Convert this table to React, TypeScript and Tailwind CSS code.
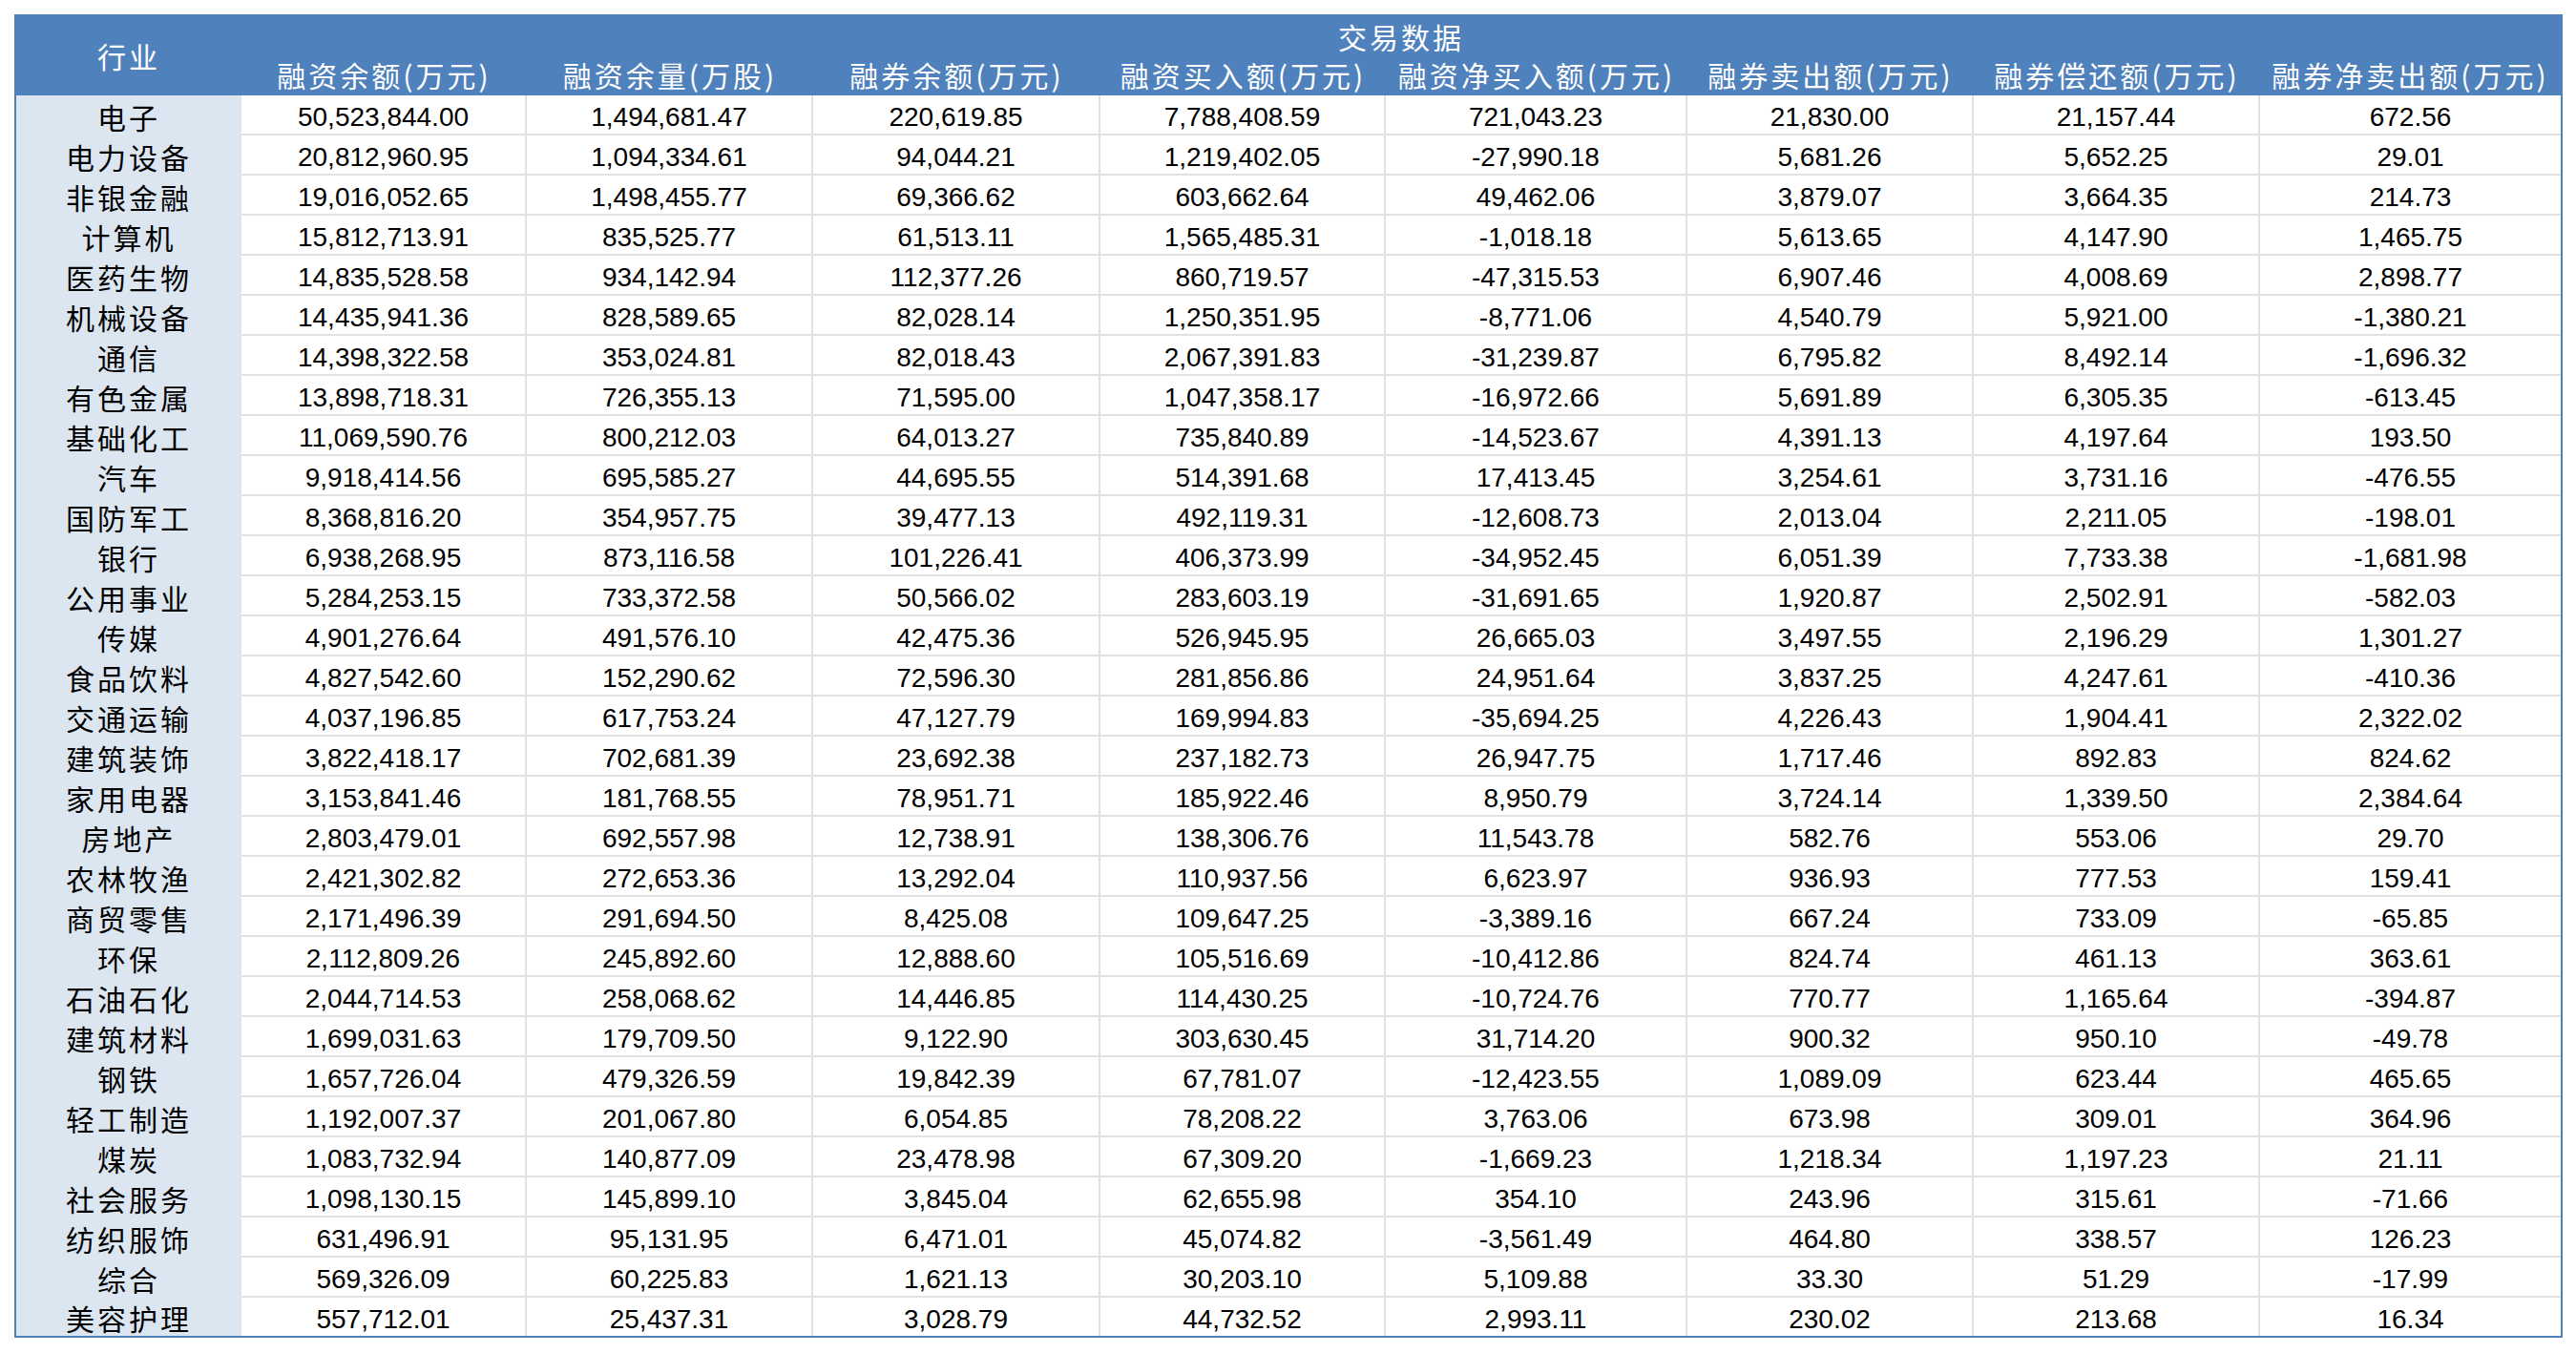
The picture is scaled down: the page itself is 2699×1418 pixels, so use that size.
import React from 'react';

const columns = [
  '融资余额(万元)',
  '融资余量(万股)',
  '融券余额(万元)',
  '融资买入额(万元)',
  '融资净买入额(万元)',
  '融券卖出额(万元)',
  '融券偿还额(万元)',
  '融券净卖出额(万元)',
];

const rows: [string, string[]][] = [
  ['电子', ['50,523,844.00', '1,494,681.47', '220,619.85', '7,788,408.59', '721,043.23', '21,830.00', '21,157.44', '672.56']],
  ['电力设备', ['20,812,960.95', '1,094,334.61', '94,044.21', '1,219,402.05', '-27,990.18', '5,681.26', '5,652.25', '29.01']],
  ['非银金融', ['19,016,052.65', '1,498,455.77', '69,366.62', '603,662.64', '49,462.06', '3,879.07', '3,664.35', '214.73']],
  ['计算机', ['15,812,713.91', '835,525.77', '61,513.11', '1,565,485.31', '-1,018.18', '5,613.65', '4,147.90', '1,465.75']],
  ['医药生物', ['14,835,528.58', '934,142.94', '112,377.26', '860,719.57', '-47,315.53', '6,907.46', '4,008.69', '2,898.77']],
  ['机械设备', ['14,435,941.36', '828,589.65', '82,028.14', '1,250,351.95', '-8,771.06', '4,540.79', '5,921.00', '-1,380.21']],
  ['通信', ['14,398,322.58', '353,024.81', '82,018.43', '2,067,391.83', '-31,239.87', '6,795.82', '8,492.14', '-1,696.32']],
  ['有色金属', ['13,898,718.31', '726,355.13', '71,595.00', '1,047,358.17', '-16,972.66', '5,691.89', '6,305.35', '-613.45']],
  ['基础化工', ['11,069,590.76', '800,212.03', '64,013.27', '735,840.89', '-14,523.67', '4,391.13', '4,197.64', '193.50']],
  ['汽车', ['9,918,414.56', '695,585.27', '44,695.55', '514,391.68', '17,413.45', '3,254.61', '3,731.16', '-476.55']],
  ['国防军工', ['8,368,816.20', '354,957.75', '39,477.13', '492,119.31', '-12,608.73', '2,013.04', '2,211.05', '-198.01']],
  ['银行', ['6,938,268.95', '873,116.58', '101,226.41', '406,373.99', '-34,952.45', '6,051.39', '7,733.38', '-1,681.98']],
  ['公用事业', ['5,284,253.15', '733,372.58', '50,566.02', '283,603.19', '-31,691.65', '1,920.87', '2,502.91', '-582.03']],
  ['传媒', ['4,901,276.64', '491,576.10', '42,475.36', '526,945.95', '26,665.03', '3,497.55', '2,196.29', '1,301.27']],
  ['食品饮料', ['4,827,542.60', '152,290.62', '72,596.30', '281,856.86', '24,951.64', '3,837.25', '4,247.61', '-410.36']],
  ['交通运输', ['4,037,196.85', '617,753.24', '47,127.79', '169,994.83', '-35,694.25', '4,226.43', '1,904.41', '2,322.02']],
  ['建筑装饰', ['3,822,418.17', '702,681.39', '23,692.38', '237,182.73', '26,947.75', '1,717.46', '892.83', '824.62']],
  ['家用电器', ['3,153,841.46', '181,768.55', '78,951.71', '185,922.46', '8,950.79', '3,724.14', '1,339.50', '2,384.64']],
  ['房地产', ['2,803,479.01', '692,557.98', '12,738.91', '138,306.76', '11,543.78', '582.76', '553.06', '29.70']],
  ['农林牧渔', ['2,421,302.82', '272,653.36', '13,292.04', '110,937.56', '6,623.97', '936.93', '777.53', '159.41']],
  ['商贸零售', ['2,171,496.39', '291,694.50', '8,425.08', '109,647.25', '-3,389.16', '667.24', '733.09', '-65.85']],
  ['环保', ['2,112,809.26', '245,892.60', '12,888.60', '105,516.69', '-10,412.86', '824.74', '461.13', '363.61']],
  ['石油石化', ['2,044,714.53', '258,068.62', '14,446.85', '114,430.25', '-10,724.76', '770.77', '1,165.64', '-394.87']],
  ['建筑材料', ['1,699,031.63', '179,709.50', '9,122.90', '303,630.45', '31,714.20', '900.32', '950.10', '-49.78']],
  ['钢铁', ['1,657,726.04', '479,326.59', '19,842.39', '67,781.07', '-12,423.55', '1,089.09', '623.44', '465.65']],
  ['轻工制造', ['1,192,007.37', '201,067.80', '6,054.85', '78,208.22', '3,763.06', '673.98', '309.01', '364.96']],
  ['煤炭', ['1,083,732.94', '140,877.09', '23,478.98', '67,309.20', '-1,669.23', '1,218.34', '1,197.23', '21.11']],
  ['社会服务', ['1,098,130.15', '145,899.10', '3,845.04', '62,655.98', '354.10', '243.96', '315.61', '-71.66']],
  ['纺织服饰', ['631,496.91', '95,131.95', '6,471.01', '45,074.82', '-3,561.49', '464.80', '338.57', '126.23']],
  ['综合', ['569,326.09', '60,225.83', '1,621.13', '30,203.10', '5,109.88', '33.30', '51.29', '-17.99']],
  ['美容护理', ['557,712.01', '25,437.31', '3,028.79', '44,732.52', '2,993.11', '230.02', '213.68', '16.34']],
];

const grid =
  'grid grid-cols-[236px_299px_300px_301px_299px_316px_300px_300px_315px]';
const cjk = "font-['Noto_Sans_CJK_SC',sans-serif] text-[30px] leading-[30px] tracking-[3px]";

export default function App() {
  return (
    <div className="min-h-screen bg-white pt-[15px] pl-[15px]">
      <div className="w-[2670px] border-x-2 border-b-2 border-[#4f81bd]">
        {/* header */}
        <div className={`${grid} grid-rows-[43px_42px] bg-[#4f81bd] text-white ${cjk}`}>
          <div className="row-span-2 flex items-center justify-center">行业</div>
          <div className="col-span-8 flex items-center justify-center pt-[2px]">交易数据</div>
          {columns.map((c) => (
            <div key={c} className="flex items-center justify-center whitespace-nowrap pb-[2px]">
              {c}
            </div>
          ))}
        </div>

        {/* body */}
        {rows.map(([name, vals], i) => {
          const last = i === rows.length - 1;
          return (
            <div key={name} className={`${grid} ${last ? 'h-[40px]' : 'h-[42px]'}`}>
              <div className={`flex items-center justify-center bg-[#dce6f1] pt-[2px] text-black ${cjk}`}>
                {name}
              </div>
              {vals.map((v, j) => (
                <div
                  key={j}
                  className={`flex items-center justify-center border-[#e1e1e1] pt-[5px] font-['Liberation_Sans',Arial,sans-serif] text-[28px] leading-[30px] text-black ${
                    last ? '' : 'border-b-2'
                  } ${j === vals.length - 1 ? '' : 'border-r-2'}`}
                >
                  {v}
                </div>
              ))}
            </div>
          );
        })}
      </div>
    </div>
  );
}
